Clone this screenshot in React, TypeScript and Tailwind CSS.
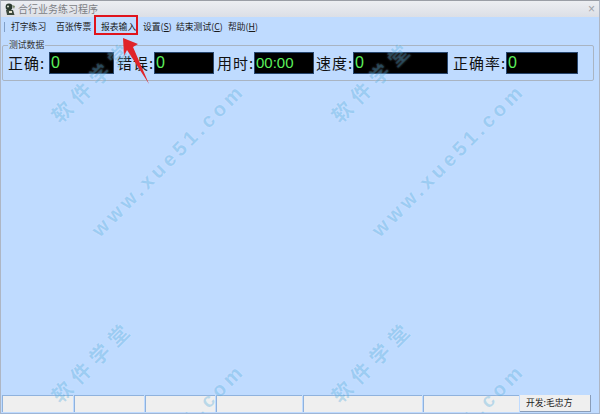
import React from 'react';

const cjk = "font-['Noto_Sans_CJK_SC',sans-serif]";

const Field = ({ label, value, labelClass, boxClass }: { label: string; value: string; labelClass: string; boxClass: string }) => (
  <>
    <span className={`text-[15px] tracking-[1px] leading-[22px] text-[#111] whitespace-nowrap ${cjk} ${labelClass}`}>{label}</span>
    <span className={`h-[22px] bg-black border border-[#27466e] pl-[1px] leading-[19px] text-[#5cf05c] font-['Liberation_Sans',sans-serif] ${boxClass}`}>{value}</span>
  </>
);

const Panel = ({ className }: { className: string }) => (
  <div className={`h-full bg-[#efefef] border-t border-l border-[#8fb2dd] border-r-white border-b-white ${className}`} />
);

const stampCn = `absolute -translate-x-1/2 -translate-y-1/2 -rotate-45 whitespace-nowrap font-bold text-[#108bcd]/25 [text-shadow:0_0_2px_rgba(255,255,255,0.25)] pointer-events-none ${cjk} text-[20px] tracking-[6.5px]`;
const stampEn = "absolute -translate-x-1/2 -translate-y-1/2 -rotate-45 whitespace-nowrap font-bold text-[#108bcd]/25 [text-shadow:0_0_2px_rgba(255,255,255,0.25)] pointer-events-none font-['Liberation_Sans',sans-serif] text-[20px] tracking-[4px]";

export default function App() {
  return (
    <div className="relative w-[600px] h-[414px] overflow-hidden flex flex-col bg-[#bfdbff] border-t border-x border-b border-t-[#9a9ea6] border-x-[#aeb6c4] border-b-[#9fb6d6]">
      {/* title bar */}
      <div className="h-[16px] shrink-0 flex items-center pl-[3px] pr-[4px] bg-gradient-to-b from-[#eceef2] to-[#dcdfe6]">
        <svg width="12" height="13" viewBox="0 0 12 13" className="shrink-0">
          <circle cx="5" cy="4" r="3.4" fill="#2b3a2f" />
          <circle cx="4" cy="3.4" r="1" fill="#dfe6d8" />
          <path d="M2 7h7l1.5 5H3z" fill="#3d4a3e" />
          <path d="M8 2l3 1-1 3z" fill="#7a8a6a" />
          <rect x="5" y="8" width="3" height="2" fill="#e6e2cf" />
        </svg>
        <span className={`ml-[2px] text-[10px] leading-[14px] text-[#7d7f85] ${cjk}`}>合行业务练习程序</span>
        <span className="ml-auto text-[12px] leading-[14px] text-[#9ea1a8] font-['Liberation_Sans',sans-serif]">×</span>
      </div>

      {/* menu bar */}
      <div className={`h-[20px] shrink-0 flex items-center pl-[3px] text-[8.8px] text-[#1a1a1a] ${cjk}`}>
        <div className="w-[1px] h-[10px] bg-[#7f9fc9] mr-[6px]" />
        <span className="w-[45px]">打字练习</span>
        <span className="w-[45px]">百张传票</span>
        <span className="w-[42px]">报表输入</span>
        <span className="w-[33px]">设置(<u>S</u>)</span>
        <span className="w-[52px]">结束测试(<u>C</u>)</span>
        <span>帮助(<u>H</u>)</span>
      </div>

      {/* test data group */}
      <fieldset className="mt-[3px] ml-[1px] w-[592px] h-[41px] shrink-0 border border-[#a9b4c2] rounded-[2px] pl-[5px]">
        <legend className={`px-[1px] text-[8.8px] leading-[10px] text-[#333] ${cjk}`}>测试数据</legend>
        <div className="flex items-center mt-[2px]">
          <Field label="正确:" value="0" labelClass="w-[41px]" boxClass="w-[65px] text-[16px]" />
          <Field label="错误:" value="0" labelClass="ml-[3px] w-[37px]" boxClass="w-[60px] text-[16px]" />
          <Field label="用时:" value="00:00" labelClass="ml-[3px] w-[37px]" boxClass="w-[60px] text-[15px]" />
          <Field label="速度:" value="0" labelClass="ml-[2px] w-[37px]" boxClass="w-[95px] text-[16px]" />
          <Field label="正确率:" value="0" labelClass="ml-[5px] w-[53px]" boxClass="w-[72px] text-[16px]" />
        </div>
      </fieldset>

      {/* empty client area */}
      <div className="flex-1" />

      {/* status bar */}
      <div className="h-[17px] mb-[1px] shrink-0 flex gap-[1px] pl-[1px]">
        <Panel className="w-[71px]" />
        <Panel className="w-[70px]" />
        <Panel className="w-[70px]" />
        <Panel className="w-[86px]" />
        <Panel className="w-[119px]" />
        <Panel className="w-[96px]" />
        <div className={`w-[71px] h-full bg-[#efefef] border-r border-b border-[#8a9db8] text-[8.8px] leading-[16px] text-[#222] pl-[6px] ${cjk}`}>开发:毛忠方</div>
      </div>

      {/* annotation over the menu */}
      <div className="absolute left-[93px] top-[14px] w-[44px] h-[20px] border-[2.5px] border-[#e0141c] pointer-events-none" />
      <svg className="absolute left-[-1px] top-[-1px] pointer-events-none" width="600" height="414">
        <polygon points="123,38 138,44 133,47 149,84 127,50 124,56" fill="#e0242a" />
      </svg>

      {/* watermark */}
      <span className={`${stampCn} left-[91px] top-[80px]`}>软件学堂</span>
      <span className={`${stampCn} left-[371px] top-[80px]`}>软件学堂</span>
      <span className={`${stampCn} left-[91px] top-[360px]`}>软件学堂</span>
      <span className={`${stampCn} left-[371px] top-[360px]`}>软件学堂</span>
      <span className={`${stampEn} left-[167px] top-[159px]`}>www.xue51.com</span>
      <span className={`${stampEn} left-[447px] top-[159px]`}>www.xue51.com</span>
      <span className={`${stampEn} left-[167px] top-[439px]`}>www.xue51.com</span>
      <span className={`${stampEn} left-[447px] top-[439px]`}>www.xue51.com</span>
    </div>
  );
}
